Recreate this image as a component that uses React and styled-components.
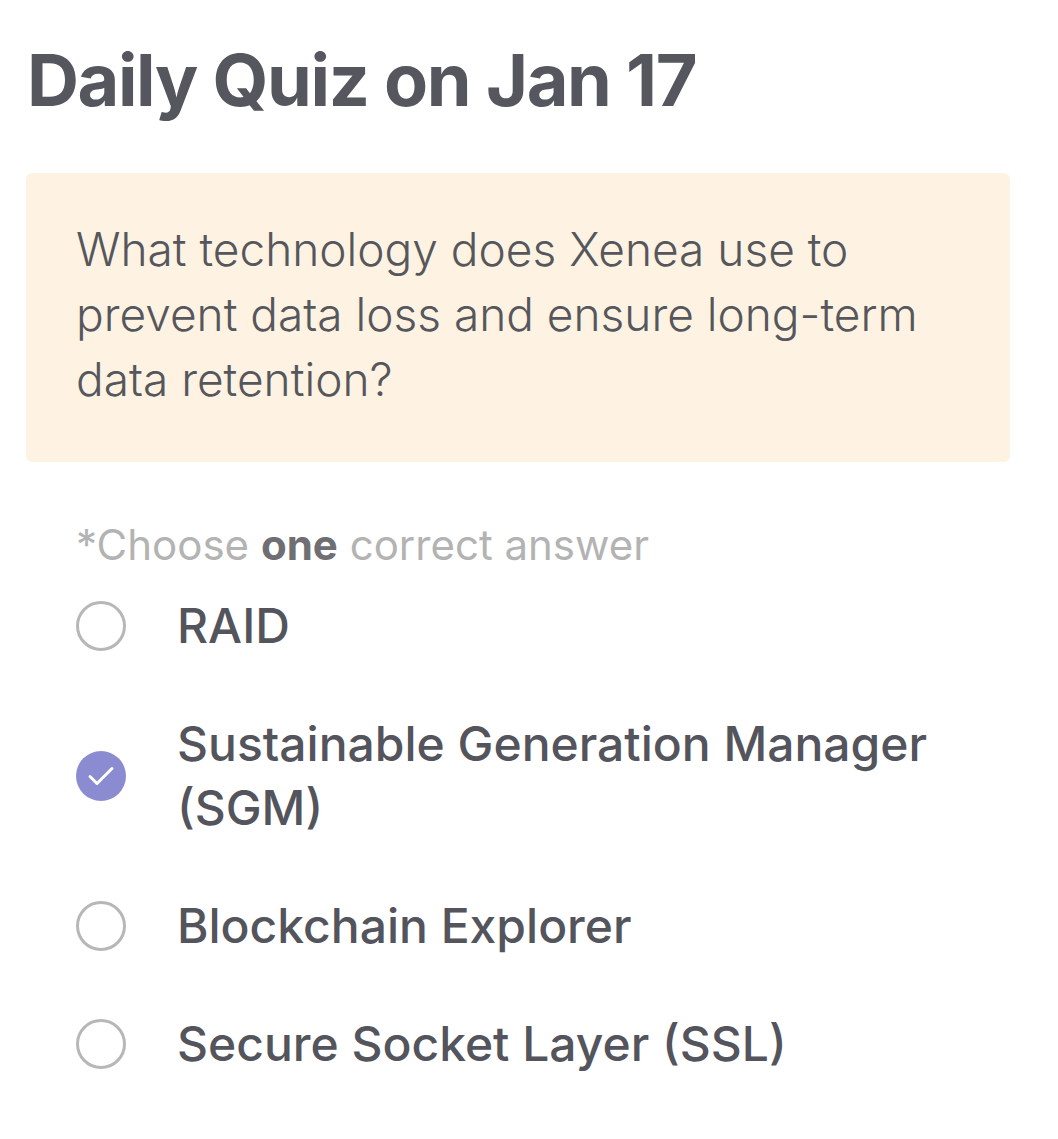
import React from 'react'
import styled, { createGlobalStyle } from 'styled-components'

const GlobalStyle = createGlobalStyle`
  body {
    margin: 0;
    background: #ffffff;
    font-family: Inter, "Noto Sans", sans-serif;
  }
`

const Page = styled.div`
  width: 1058px;
  padding: 30px 48px 40px 26px;
  box-sizing: border-box;
`

const Title = styled.h1`
  margin: 0 0 0 1px;
  font-size: 72px;
  line-height: 100px;
  font-weight: 700;
  letter-spacing: -1.4px;
  color: #55565e;
`

const QuestionBox = styled.div`
  margin-top: 43px;
  background: #fef3e2;
  border-radius: 6px;
  padding: 44px 50px 50px 50px;
  font-size: 46px;
  line-height: 65px;
  font-weight: 300;
  color: #56575c;
`

const Hint = styled.div`
  margin: 58px 0 0 50px;
  font-size: 42px;
  line-height: 50px;
  color: #b3b3b3;

  b {
    color: #6f6f73;
    font-weight: 700;
  }
`

const Options = styled.div`
  margin: 24px 0 0 50px;
  display: flex;
  flex-direction: column;
  gap: 54px;
`

const Option = styled.label`
  display: flex;
  align-items: center;
  gap: 51px;
  cursor: pointer;
`

const Radio = styled.span`
  flex: none;
  width: 50px;
  height: 50px;
  border-radius: 50%;
  box-sizing: border-box;
  display: flex;
  align-items: center;
  justify-content: center;
  border: ${({ $checked }) => ($checked ? 'none' : '3px solid #b7b7b7')};
  background: ${({ $checked }) => ($checked ? '#8b8bd1' : 'transparent')};
`

const OptionText = styled.span`
  font-size: 48px;
  line-height: 64px;
  font-weight: 500;
  color: #53545c;
`

const options = [
  { text: 'RAID' },
  { text: 'Sustainable Generation Manager (SGM)', checked: true },
  { text: 'Blockchain Explorer' },
  { text: 'Secure Socket Layer (SSL)' },
]

const App = () => {
  return (
    <Page>
      <GlobalStyle />
      <Title>Daily Quiz on Jan 17</Title>
      <QuestionBox>
        What technology does Xenea use to prevent data loss and ensure long-term data retention?
      </QuestionBox>
      <Hint>
        *Choose <b>one</b> correct answer
      </Hint>
      <Options>
        {options.map((o) => (
          <Option key={o.text}>
            <Radio $checked={o.checked}>
              {o.checked && (
                <svg width="50" height="50" viewBox="0 0 50 50" fill="none">
                  <path d="M14 25.5l7 7L36 17.5" stroke="#fff" strokeWidth="3" strokeLinecap="round" strokeLinejoin="round" />
                </svg>
              )}
            </Radio>
            <OptionText>{o.text}</OptionText>
          </Option>
        ))}
      </Options>
    </Page>
  )
}

export default App
